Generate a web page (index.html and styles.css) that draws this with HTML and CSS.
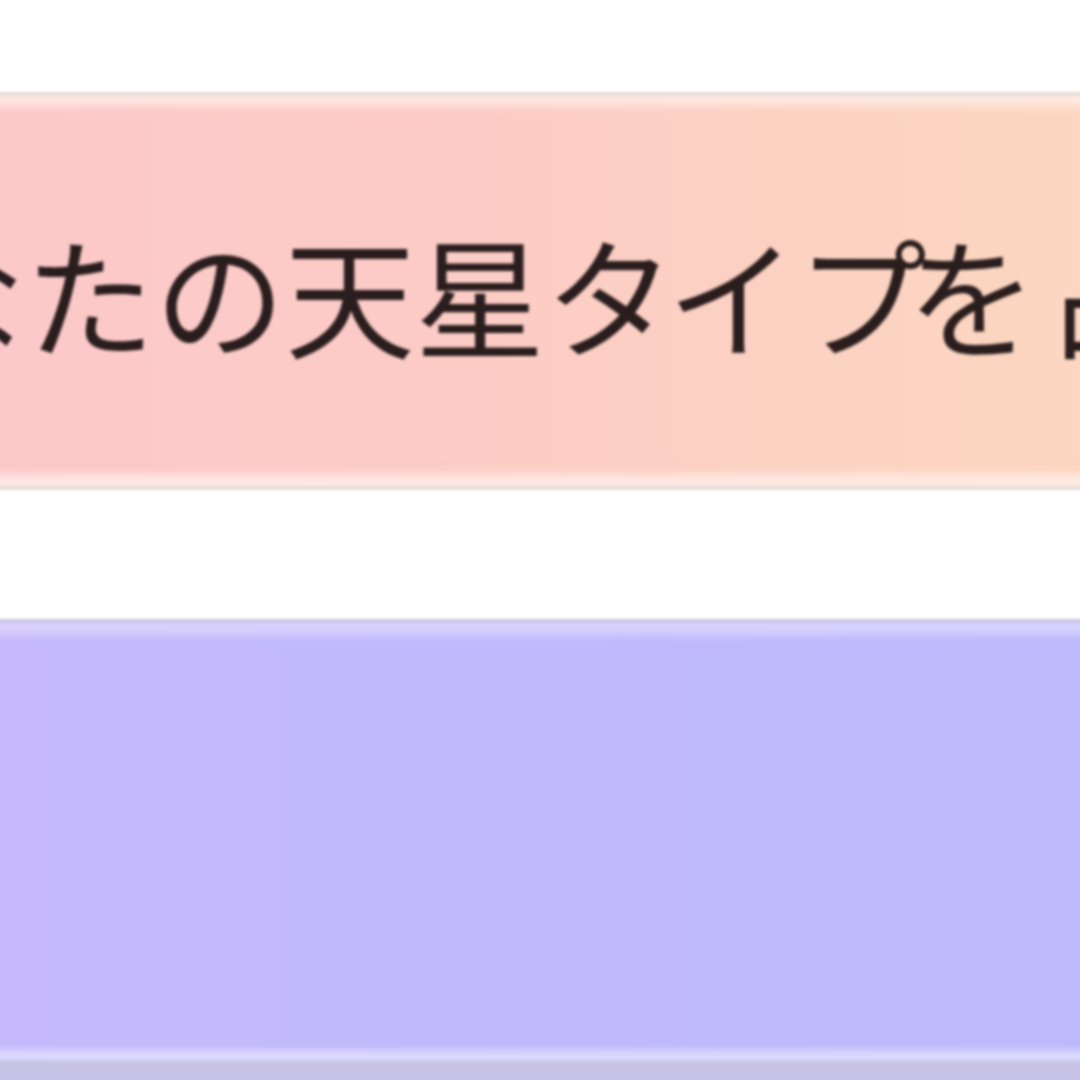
FILE: index.html
```html
<!DOCTYPE html>
<html lang="ja">
<head>
<meta charset="utf-8">
<title>天星タイプ</title>
<link rel="stylesheet" href="styles.css">
</head>
<body>
  <main class="page">
    <section class="card card-pink">
      <h1 class="title">あなたの天星<span class="kana-ta">タ</span>イ<span class="kana-pu">プ</span><span class="kana-wo">を</span>占う</h1>
    </section>
    <section class="card card-lavender"></section>
    <div class="next-strip"></div>
  </main>
</body>
</html>
```

FILE: styles.css
```css
html, body {
  margin: 0;
  padding: 0;
  background: #ffffff;
}

body {
  width: 1080px;
  height: 1080px;
  overflow: hidden;
  font-family: "Noto Sans CJK JP", "Noto Sans", sans-serif;
}

.page {
  display: flex;
  flex-direction: column;
  gap: 129px;
  padding-top: 92px;
  filter: blur(1.4px);
}

.card {
  margin: 0 -40px;
  box-sizing: border-box;
  border-top: 4px solid #e6dcd8;
  border-bottom: 4px solid #e6dcd8;
  display: flex;
  align-items: center;
  justify-content: center;
  padding-right: 10px;
}

.card-pink {
  height: 398px;
  background: linear-gradient(90deg, #fbc8c9 0%, #fccbc6 40%, #fcd1c2 70%, #fcd7c0 100%);
  box-shadow:
    inset 0 14px 8px -4px rgba(255, 240, 235, 0.75),
    inset 0 -16px 8px -4px rgba(255, 242, 240, 0.7);
}

.card-lavender {
  height: 445px;
  border-top-color: #c9c5e2;
  border-bottom-color: #c9c5e4;
  background: linear-gradient(90deg, #c5b9fb 0%, #c0b9fb 50%, #bbbafa 100%);
  box-shadow:
    inset 0 16px 8px -4px rgba(225, 220, 255, 0.7),
    inset 0 -14px 6px -4px rgba(225, 222, 255, 0.85);
}

.next-strip {
  margin: -129px -40px 0;
  height: 40px;
  background: #c6c2e6;
}

.title {
  margin: 0;
  flex: none;
  white-space: nowrap;
  font-size: 130px;
  line-height: 1;
  font-weight: 400;
  color: #2a1d1d;
}

.kana-ta {
  letter-spacing: -8px;
}

.kana-pu {
  letter-spacing: -20px;
}

.kana-wo {
  letter-spacing: 8px;
}
```
